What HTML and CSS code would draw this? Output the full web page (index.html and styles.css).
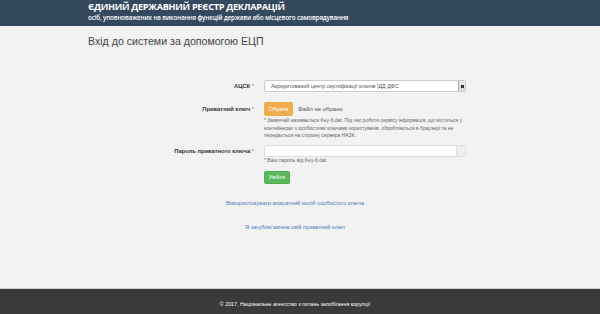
FILE: index.html
```html
<!DOCTYPE html>
<html lang="uk">
<head>
  <meta charset="UTF-8">
  <meta name="viewport" content="width=device-width, initial-scale=1">
  <title>Вхід до системи за допомогою ЕЦП</title>
  <link rel="stylesheet" href="styles.css">
</head>
<body>

<div class="page">
  <header class="top">
    <div class="wrap">
      <div class="brand-title">ЄДИНИЙ ДЕРЖАВНИЙ РЕЄСТР ДЕКЛАРАЦІЙ</div>
      <div class="brand-sub">осіб, уповноважених на виконання функцій держави або місцевого самоврядування</div>
    </div>
  </header>

  <main class="wrap content">
    <h1>Вхід до системи за допомогою ЕЦП</h1>

    <form class="login-form">
      <div class="row row-acsk">
        <label class="lbl">АЦСК <span class="req">*</span></label>
        <div class="ctl">
          <div class="select">
            <span class="select-text">Акредитований центр сертифікації ключів ІДД ДФС</span>
            <span class="select-arrow"><i></i></span>
          </div>
        </div>
      </div>

      <div class="row row-key">
        <label class="lbl">Приватний ключ <span class="req">*</span></label>
        <div class="ctl">
          <div class="file-line">
            <span class="btn btn-orange">Обрати</span>
            <span class="file-name">Файл не обрано</span>
          </div>
          <p class="help">* Зазвичай називається Key-6.dat. Під час роботи сервісу інформація, що міститься у контейнерах з особистими ключами користувачів, обробляються в браузері та не передається на сторону сервера НАЗК.</p>
        </div>
      </div>

      <div class="row row-pass">
        <label class="lbl">Пароль приватного ключа <span class="req">*</span></label>
        <div class="ctl">
          <div class="input-group">
            <span class="input"></span>
            <span class="addon"></span>
          </div>
          <p class="help">* Ваш пароль від Key-6.dat</p>
          <span class="btn btn-green">Увійти</span>
        </div>
      </div>
    </form>

    <div class="links">
      <a href="#" class="link-first">Використовувати апаратний носій особистого ключа</a>
      <a href="#" class="link-second">Я загубив/змінив свій приватний ключ</a>
    </div>
  </main>

  <footer class="bottom">
    © 2017, Національне агентство з питань запобігання корупції
  </footer>
</div>

</body>
</html>
```

FILE: styles.css
```css
* {
  box-sizing: border-box;
}
body {
  margin: 0;
  background-color: #f2f2f2;
  font-family: "Liberation Sans", Arial, sans-serif;
  color: #333;
}
.page {
  min-height: 314px;
  display: flex;
  flex-direction: column;
}
.wrap {
  width: 414px;
  margin-left: 88px;
}
.top {
  background-color: #34495e;
  height: 26px;
  padding-top: 1px;
  color: white;
  font-family: "Open Sans", sans-serif;
}
.brand-title {
  font-size: 9.2px;
  line-height: 12.5px;
  font-weight: 700;
  letter-spacing: -0.3px;
  white-space: nowrap;
}
.brand-sub {
  font-size: 6.3px;
  line-height: 8.5px;
  font-weight: 600;
  letter-spacing: -0.15px;
  white-space: nowrap;
}
.content {
  flex: 1;
}
h1 {
  margin: 0;
  padding-top: 9px;
  font-size: 10.6px;
  line-height: 13px;
  font-weight: normal;
  color: #444;
}
.login-form {
  margin-top: 32px;
}
.row {
  display: grid;
  grid-template-columns: 166px 202px;
  column-gap: 10px;
}
.lbl {
  text-align: right;
  font-size: 5.8px;
  font-weight: bold;
  color: #333;
}
.row-acsk .lbl {
  line-height: 12px;
}
.row-key .lbl {
  line-height: 14px;
}
.row-pass .lbl {
  line-height: 12px;
}
.req {
  color: #d9534f;
  font-weight: normal;
}
.row-key {
  margin-top: 10px;
}
.row-pass {
  margin-top: 5px;
}
.select {
  display: flex;
  height: 12px;
  background: white;
  border: 1px solid #ccc;
  border-radius: 2px;
}
.select-text {
  flex: 1;
  font-size: 5.4px;
  line-height: 10px;
  padding-left: 6px;
  color: #555;
  white-space: nowrap;
}
.select-arrow {
  width: 7px;
  background: linear-gradient(#ececec, #d6d6d6);
  border-left: 1px solid #aaa;
  display: flex;
  align-items: center;
  justify-content: center;
}
.select-arrow i {
  width: 3px;
  height: 3px;
  background: #333;
}
.file-line {
  display: flex;
  align-items: center;
  height: 14px;
}
.btn {
  display: inline-block;
  color: white;
  font-size: 5.6px;
  text-align: center;
  border-radius: 2px;
}
.btn-orange {
  background-color: #f0ad4e;
  width: 29px;
  height: 14px;
  line-height: 14px;
}
.btn-green {
  background-color: #5cb85c;
  width: 26px;
  height: 13px;
  margin-top: 5px;
  border: 1px solid #4cae4c;
  line-height: 11px;
}
.file-name {
  margin-left: 5px;
  font-size: 6px;
  color: #555;
}
.help {
  margin: 0;
  font-size: 5px;
  line-height: 7.5px;
  color: #666;
}
.row-key .help {
  margin-top: 1px;
}
.input-group {
  display: flex;
  height: 12px;
}
.input {
  flex: 1;
  background: white;
  border: 1px solid #ddd;
  border-radius: 2px 0 0 2px;
}
.addon {
  width: 9px;
  background: #eee;
  border: 1px solid #ddd;
  border-left: none;
  border-radius: 0 2px 2px 0;
}
.row-pass .help {
  margin-top: 0.5px;
}
.links {
  margin-top: 15px;
  text-align: center;
  font-size: 5.7px;
}
.links a {
  display: block;
  color: #4d7dbf;
  text-decoration: none;
  line-height: 8px;
}
.link-second {
  margin-top: 16px;
}
.bottom {
  height: 26px;
  background-color: #3a3a3a;
  border-top: 1px solid #cfcfcf;
  color: white;
  font-size: 5.3px;
  text-align: center;
  padding: 11px 10px 0 0;
  line-height: 8px;
}
```
